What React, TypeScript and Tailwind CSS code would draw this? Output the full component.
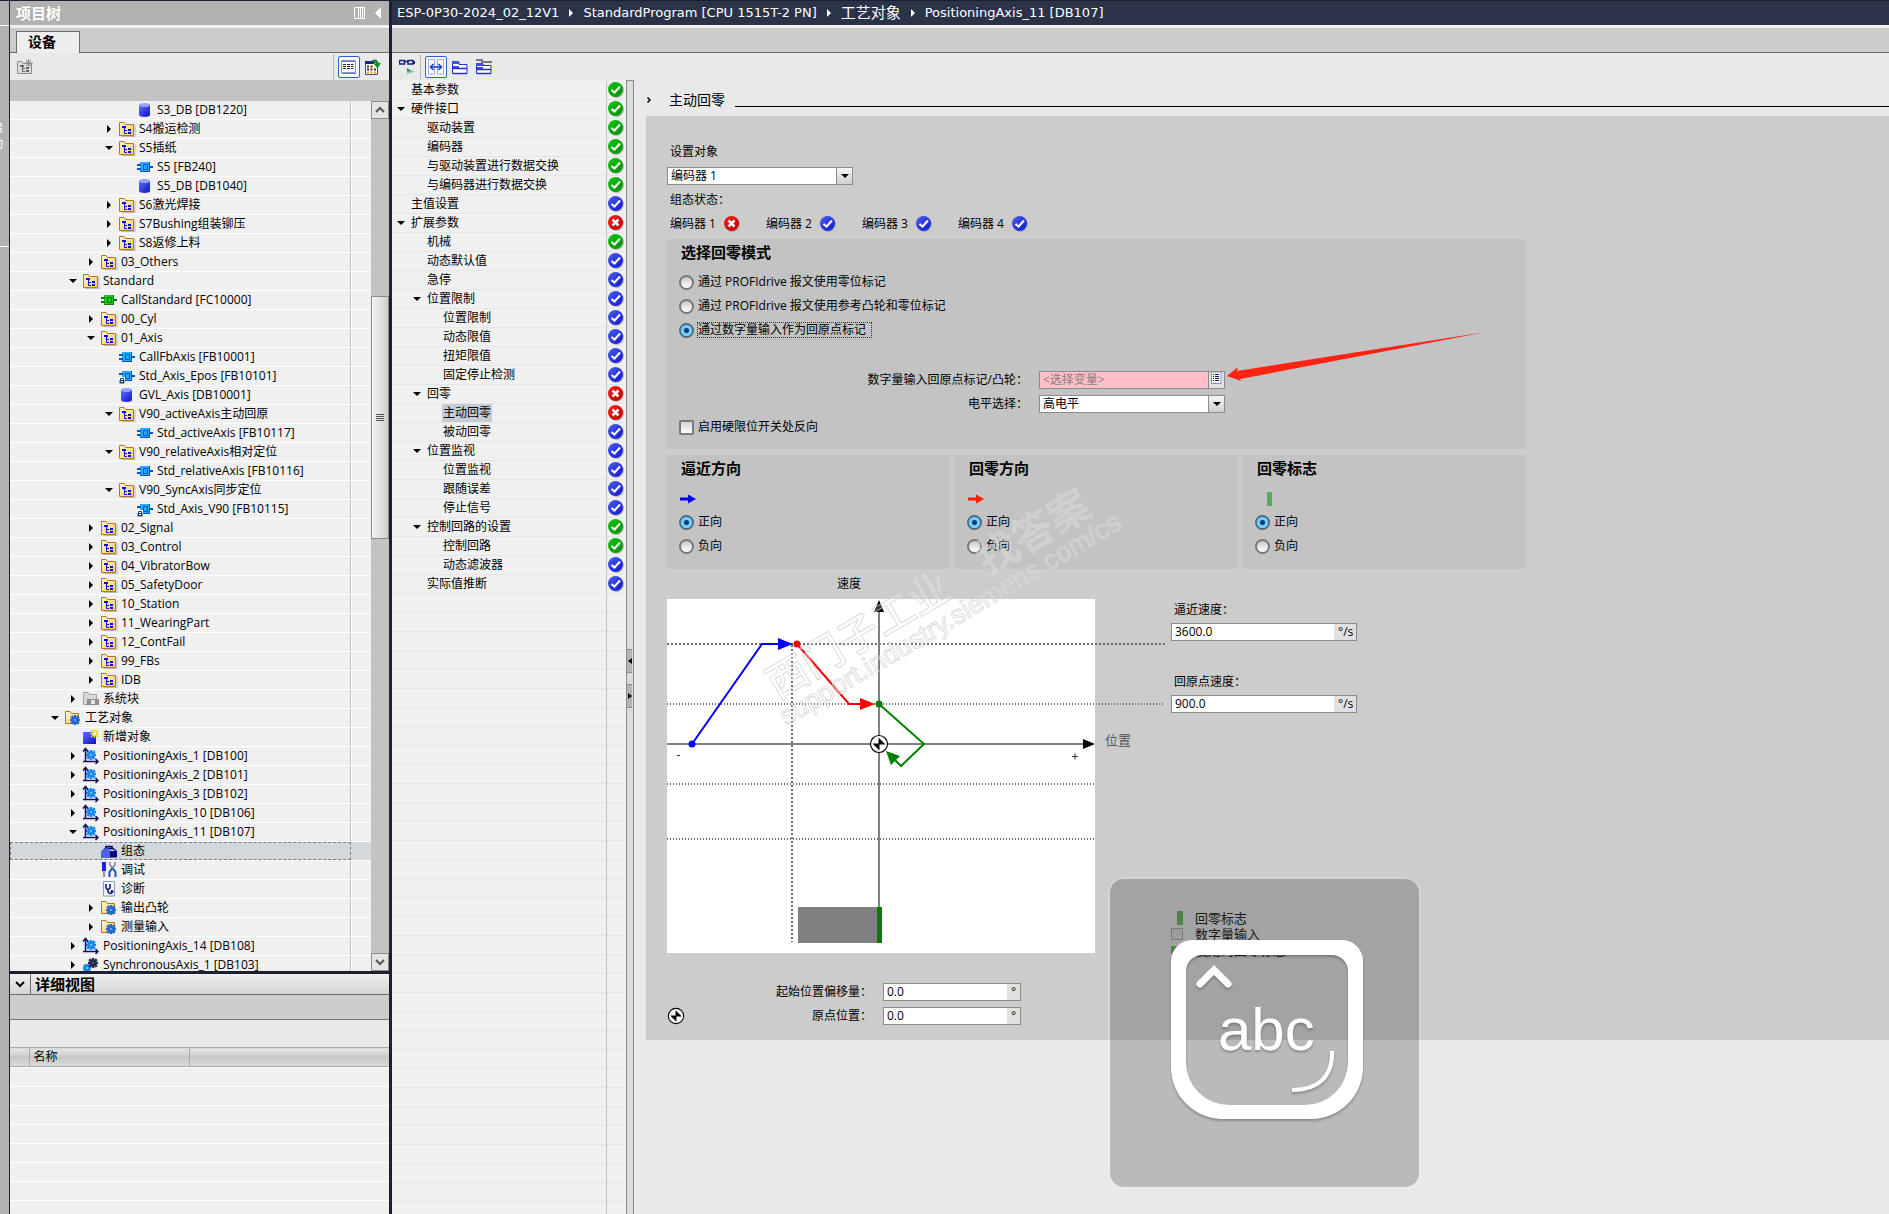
import React, { useState } from 'react';

type IconName =
  | 'folder' | 'db' | 'fb' | 'fbLocked' | 'fc' | 'system' | 'techFolder' | 'add'
  | 'axis' | 'sync' | 'config' | 'commission' | 'diagnose';

interface TreeRow {
  level: number;
  icon: IconName;
  text: string;
  open?: boolean;
  selected?: boolean;
}

type Status = 'ok' | 'default' | 'error';

interface NavRow {
  level: number;
  text: string;
  status: Status;
  open?: boolean;
  selected?: boolean;
}

const treeRows: TreeRow[] = [
  { level: 4, icon: 'db', text: 'S3_DB [DB1220]' },
  { level: 3, icon: 'folder', text: 'S4搬运检测', open: false },
  { level: 3, icon: 'folder', text: 'S5插纸', open: true },
  { level: 4, icon: 'fb', text: 'S5 [FB240]' },
  { level: 4, icon: 'db', text: 'S5_DB [DB1040]' },
  { level: 3, icon: 'folder', text: 'S6激光焊接', open: false },
  { level: 3, icon: 'folder', text: 'S7Bushing组装铆压', open: false },
  { level: 3, icon: 'folder', text: 'S8返修上料', open: false },
  { level: 2, icon: 'folder', text: '03_Others', open: false },
  { level: 1, icon: 'folder', text: 'Standard', open: true },
  { level: 2, icon: 'fc', text: 'CallStandard [FC10000]' },
  { level: 2, icon: 'folder', text: '00_Cyl', open: false },
  { level: 2, icon: 'folder', text: '01_Axis', open: true },
  { level: 3, icon: 'fb', text: 'CallFbAxis [FB10001]' },
  { level: 3, icon: 'fbLocked', text: 'Std_Axis_Epos [FB10101]' },
  { level: 3, icon: 'db', text: 'GVL_Axis [DB10001]' },
  { level: 3, icon: 'folder', text: 'V90_activeAxis主动回原', open: true },
  { level: 4, icon: 'fb', text: 'Std_activeAxis [FB10117]' },
  { level: 3, icon: 'folder', text: 'V90_relativeAxis相对定位', open: true },
  { level: 4, icon: 'fb', text: 'Std_relativeAxis [FB10116]' },
  { level: 3, icon: 'folder', text: 'V90_SyncAxis同步定位', open: true },
  { level: 4, icon: 'fbLocked', text: 'Std_Axis_V90 [FB10115]' },
  { level: 2, icon: 'folder', text: '02_Signal', open: false },
  { level: 2, icon: 'folder', text: '03_Control', open: false },
  { level: 2, icon: 'folder', text: '04_VibratorBow', open: false },
  { level: 2, icon: 'folder', text: '05_SafetyDoor', open: false },
  { level: 2, icon: 'folder', text: '10_Station', open: false },
  { level: 2, icon: 'folder', text: '11_WearingPart', open: false },
  { level: 2, icon: 'folder', text: '12_ContFail', open: false },
  { level: 2, icon: 'folder', text: '99_FBs', open: false },
  { level: 2, icon: 'folder', text: 'IDB', open: false },
  { level: 1, icon: 'system', text: '系统块', open: false },
  { level: 0, icon: 'techFolder', text: '工艺对象', open: true },
  { level: 1, icon: 'add', text: '新增对象' },
  { level: 1, icon: 'axis', text: 'PositioningAxis_1 [DB100]', open: false },
  { level: 1, icon: 'axis', text: 'PositioningAxis_2 [DB101]', open: false },
  { level: 1, icon: 'axis', text: 'PositioningAxis_3 [DB102]', open: false },
  { level: 1, icon: 'axis', text: 'PositioningAxis_10 [DB106]', open: false },
  { level: 1, icon: 'axis', text: 'PositioningAxis_11 [DB107]', open: true },
  { level: 2, icon: 'config', text: '组态', selected: true },
  { level: 2, icon: 'commission', text: '调试' },
  { level: 2, icon: 'diagnose', text: '诊断' },
  { level: 2, icon: 'techFolder', text: '输出凸轮', open: false },
  { level: 2, icon: 'techFolder', text: '测量输入', open: false },
  { level: 1, icon: 'axis', text: 'PositioningAxis_14 [DB108]', open: false },
  { level: 1, icon: 'sync', text: 'SynchronousAxis_1 [DB103]', open: false }
];

const navRows: NavRow[] = [
  { level: 0, text: '基本参数', status: 'ok' },
  { level: 0, text: '硬件接口', status: 'ok', open: true },
  { level: 1, text: '驱动装置', status: 'ok' },
  { level: 1, text: '编码器', status: 'ok' },
  { level: 1, text: '与驱动装置进行数据交换', status: 'ok' },
  { level: 1, text: '与编码器进行数据交换', status: 'ok' },
  { level: 0, text: '主值设置', status: 'default' },
  { level: 0, text: '扩展参数', status: 'error', open: true },
  { level: 1, text: '机械', status: 'ok' },
  { level: 1, text: '动态默认值', status: 'default' },
  { level: 1, text: '急停', status: 'default' },
  { level: 1, text: '位置限制', status: 'default', open: true },
  { level: 2, text: '位置限制', status: 'default' },
  { level: 2, text: '动态限值', status: 'default' },
  { level: 2, text: '扭矩限值', status: 'default' },
  { level: 2, text: '固定停止检测', status: 'default' },
  { level: 1, text: '回零', status: 'error', open: true },
  { level: 2, text: '主动回零', status: 'error', selected: true },
  { level: 2, text: '被动回零', status: 'default' },
  { level: 1, text: '位置监视', status: 'default', open: true },
  { level: 2, text: '位置监视', status: 'default' },
  { level: 2, text: '跟随误差', status: 'default' },
  { level: 2, text: '停止信号', status: 'default' },
  { level: 1, text: '控制回路的设置', status: 'ok', open: true },
  { level: 2, text: '控制回路', status: 'ok' },
  { level: 2, text: '动态滤波器', status: 'default' },
  { level: 1, text: '实际值推断', status: 'default' }
];

const Gear: React.FC<{ cx: number; cy: number; r: number; color: string; hole?: string }> = ({ cx, cy, r, color, hole = '#fff' }) => (
  <g stroke={color} strokeWidth="2.500">
    <path d={`M${cx - r} ${cy}H${cx + r}M${cx} ${cy - r}V${cy + r}`} />
    <path d={`M${cx - r * 0.75} ${cy - r * 0.75}L${cx + r * 0.75} ${cy + r * 0.75}M${cx + r * 0.75} ${cy - r * 0.75}L${cx - r * 0.75} ${cy + r * 0.75}`} />
    <circle cx={cx} cy={cy} r={r * 0.65} fill={color} stroke="none" />
    <circle cx={cx} cy={cy} r=".8" fill={hole} stroke="none" />
  </g>
);

const FolderShape = () => (
  <>
    <path d="M2.5 15.5H16V4" stroke="#b9b9b9" fill="none" />
    <path d="M.5 1.5H5L6.500 3.500H14.500V14.500H.5Z" fill="url(#folderFill)" stroke="#b07a1c" />
  </>
);

const Block: React.FC<{ light: string; dark: string; locked?: boolean }> = ({ light, dark, locked }) => (
  <>
    <path d="M3 3H13V13H3Z" fill={dark} />
    <path d="M3 3H12V12H3Z" fill={light} />
    <path d="M0 5H4V7H0ZM0 9H4V11H0ZM12 7H16V9H12Z" fill={dark} />
    <path d="M6.500 5.500H10.500V10.500H6.500Z" fill={light} stroke={dark} />
    {locked && (
      <>
        <path d="M0 9H6V16H0Z" fill="#fff" />
        <path d="M1.500 12V10.500H4.500V12" stroke="#1c3f78" fill="none" />
        <path d="M.5 12H5.500V15.500H.5Z" fill="#1c3f78" />
        <path d="M2 13.500H4" stroke="#fff" />
      </>
    )}
  </>
);

const TreeIcon: React.FC<{ name: IconName }> = ({ name }) => (
  <svg className="w-4 h-4 shrink-0 overflow-visible" viewBox="0 0 16 16" fill="none">
    {name === 'folder' && (
      <>
        <FolderShape />
        <path d="M3 5H7V7H3ZM9 8H12V10H9ZM9 11H12V13H9Z" fill="#0808e8" />
        <path d="M5.500 7V12.500H8M5.500 9.500H8" stroke="#0808e8" />
      </>
    )}
    {name === 'db' && (
      <>
        <path d="M2 3V13C2 15.500 13 15.500 13 13V3Z" fill="url(#dbFill)" />
        <ellipse cx="7.500" cy="3" rx="5.500" ry="2" fill="#8ea2ff" />
      </>
    )}
    {name === 'fb' && <Block light="#25a8ff" dark="#0057c2" />}
    {name === 'fbLocked' && <Block light="#25a8ff" dark="#0057c2" locked />}
    {name === 'fc' && <Block light="#1fc41f" dark="#0b7a17" />}
    {name === 'system' && (
      <>
        <path d="M.5 1.500H5L6.500 3.500H13.500V13.500H.5Z" fill="#d8d8d8" stroke="#a2a2a2" />
        <path d="M4 8H16V14H4Z" fill="#8c8c8c" />
        <path d="M8 9H12V13H8Z" fill="#e4e4e4" />
      </>
    )}
    {name === 'techFolder' && (
      <>
        <path d="M.5 1.500H5L6.500 3.500H13.500V13.500H.5Z" fill="url(#folderFill)" stroke="#b07a1c" />
        <Gear cx={10} cy={10} r={5} color="#2469d8" hole="#ffe9b0" />
      </>
    )}
    {name === 'add' && (
      <>
        <path d="M0 3H13V15H0Z" fill="url(#dbFill)" />
        <path d="M11.500 0V9M7 4.500H16M8 1L15 8M15 1L8 8" stroke="#e8dc20" strokeWidth="1.500" />
        <circle cx="11.500" cy="4.500" r="1.500" fill="#fff" />
      </>
    )}
    {name === 'axis' && (
      <>
        <Gear cx={8} cy={7} r={5} color="#1787ee" />
        <path d="M2.500 1V13.500H14M0 3.500L2.500 .5L5 3.500M12.500 11L15 13.500L12.500 16M0 13.500H2.500" stroke="#14145c" strokeWidth="1.500" />
      </>
    )}
    {name === 'sync' && (
      <>
        <Gear cx={4} cy={11} r={4} color="#1787ee" />
        <Gear cx={10} cy={6} r={5} color="#23284f" hole="#8890c8" />
      </>
    )}
    {name === 'config' && (
      <>
        <path d="M0 9L4 4.500H12L16 8V14.500H0Z" fill="#05057f" />
        <path d="M0 9L4 5H7L9 9V14.500H0Z" fill="#4f62e8" />
        <path d="M5 5.500V3.500H11V5.500" stroke="#05057f" strokeWidth="1.500" />
        <path d="M7 6.500H13L14 8H9Z" fill="#c9d0ff" />
      </>
    )}
    {name === 'commission' && (
      <>
        <path d="M1 0H5V9H1Z" fill="#1726d8" />
        <path d="M3 9V15" stroke="#6d7590" strokeWidth="1.500" />
        <path d="M8.500 15V10L11.500 6L14.500 10V15" stroke="#234ec4" strokeWidth="2" />
        <path d="M9 0V3L11.500 6L14 3V0" stroke="#7d86a4" strokeWidth="1.500" />
      </>
    )}
    {name === 'diagnose' && (
      <>
        <path d="M2.500 .5H13.500V15H2.500Z" fill="#eef2ff" stroke="#8b9bc8" />
        <path d="M5 3V6C5 9 9 9 9 6V3M7 8V10C7 13 11 13 11 11" stroke="#14145c" strokeWidth="1.500" />
        <circle cx="11" cy="10.500" r="1.500" fill="#14145c" />
      </>
    )}
  </svg>
);

const Expander: React.FC<{ open?: boolean }> = ({ open }) => (
  <span className="w-[18px] h-4 shrink-0 flex items-center">
    {open !== undefined && (
      <button type="button" aria-label={open ? '折叠' : '展开'} className="w-4 h-4 flex items-center justify-center">
        <svg className="w-2 h-2" viewBox="0 0 8 8">
          {open ? <path d="M0 2H8L4 6Z" /> : <path d="M2 0L6 4L2 8Z" />}
        </svg>
      </button>
    )}
  </span>
);

const StatusIcon: React.FC<{ status: Status }> = ({ status }) => (
  <svg className="w-4 h-4 shrink-0" viewBox="0 0 16 16" fill="none">
    <circle cx="8.500" cy="8.500" r="7.500" fill="#9a9a9a" opacity=".6" />
    <circle cx="7.500" cy="7.500" r="7.500" fill={`url(#${status}Fill)`} />
    {status === 'error' ? (
      <path d="M4.500 4.500L10.500 10.500M10.500 4.500L4.500 10.500" stroke="#fff" strokeWidth="2.500" />
    ) : (
      <path d="M3.500 8L6.500 10.500L12 4.500" stroke="#fff" strokeWidth="2" />
    )}
  </svg>
);

// Shared gradients referenced by the small icons
const Gradients = () => (
  <svg className="absolute w-0 h-0" aria-hidden="true">
    <defs>
      <linearGradient id="folderFill" x1="0" y1="0" x2="1" y2="1">
        <stop offset="0" stopColor="#fff6d0" />
        <stop offset="1" stopColor="#fbc95a" />
      </linearGradient>
      <linearGradient id="dbFill" x1="0" y1="0" x2="1" y2="1">
        <stop offset="0" stopColor="#5a70ff" />
        <stop offset="1" stopColor="#1010c8" />
      </linearGradient>
      <linearGradient id="okFill" x1="0" y1="0" x2="1" y2="1">
        <stop offset="0" stopColor="#0cca0c" />
        <stop offset="1" stopColor="#078a07" />
      </linearGradient>
      <linearGradient id="defaultFill" x1="0" y1="0" x2="1" y2="1">
        <stop offset="0" stopColor="#4a62ee" />
        <stop offset="1" stopColor="#1212cc" />
      </linearGradient>
      <linearGradient id="errorFill" x1="0" y1="0" x2="1" y2="1">
        <stop offset="0" stopColor="#ff1c1c" />
        <stop offset="1" stopColor="#b80000" />
      </linearGradient>
    </defs>
  </svg>
);

const ProjectTree = () => (
  <div className="flex-1 min-h-0 flex bg-[#f0f0f0]">
    <ul className="flex-1 min-w-0 overflow-hidden">
      {treeRows.map((row, index) => (
        <li key={index} className="flex h-[19px] border-b border-white">
          <div
            className={
              row.selected
                ? 'flex-1 min-w-0 flex items-center bg-[#d2d8dc] outline-1 outline-dashed -outline-offset-1 outline-[#7c7c7c] whitespace-nowrap'
                : 'flex-1 min-w-0 flex items-center border-r border-[#bdbdbd] whitespace-nowrap'
            }
            style={{ paddingLeft: 37 + row.level * 18 }}
          >
            <Expander open={row.open} />
            <TreeIcon name={row.icon} />
            <span className="ml-1">{row.text}</span>
          </div>
          <div className={row.selected ? 'w-5 bg-[#d2d8dc]' : 'w-5 border-l border-white'} />
        </li>
      ))}
    </ul>
    <div className="w-[18px] bg-[#c3c3c3] flex flex-col">
      <button type="button" aria-label="向上滚动" className="h-[18px] shrink-0 border border-[#8c8c8c] bg-[#e4e4e4] flex items-center justify-center">
        <svg className="w-[10px] h-[10px]" viewBox="0 0 10 10" fill="none">
          <path d="M1 7L5 3L9 7" stroke="#555" strokeWidth="2" />
        </svg>
      </button>
      <div className="flex-[178] min-h-0" />
      <div className="flex-[242] min-h-0 border border-[#8c8c8c] bg-linear-to-r from-[#f4f4f4] to-[#cfcfcf] flex flex-col items-center justify-center gap-px">
        <span className="w-2 h-px bg-[#555]" />
        <span className="w-2 h-px bg-[#555]" />
        <span className="w-2 h-px bg-[#555]" />
        <span className="w-2 h-px bg-[#555]" />
      </div>
      <div className="flex-[415] min-h-0" />
      <button type="button" aria-label="向下滚动" className="h-[18px] shrink-0 border border-[#8c8c8c] bg-[#e4e4e4] flex items-center justify-center">
        <svg className="w-[10px] h-[10px]" viewBox="0 0 10 10" fill="none">
          <path d="M1 3L5 7L9 3" stroke="#555" strokeWidth="2" />
        </svg>
      </button>
    </div>
  </div>
);

const DetailView = () => (
  <section className="h-[243px] shrink-0 flex flex-col border-t-[3px] border-[#1b2033]">
    <div className="h-[21px] shrink-0 flex items-stretch border-b border-[#6b6b6b] bg-linear-to-b from-[#f0f0f0] to-[#d4d4d4]">
      <button type="button" aria-label="折叠详细视图" className="w-[21px] border-r border-[#6b6b6b] flex items-center justify-center">
        <svg className="w-[10px] h-[10px]" viewBox="0 0 10 10" fill="none">
          <path d="M1 3L5 7L9 3" stroke="#000" strokeWidth="2" />
        </svg>
      </button>
      <h2 className="pl-1 text-[15px] leading-5 font-bold">详细视图</h2>
    </div>
    <div className="h-[25px] shrink-0 bg-[#ccc] border-b border-[#777]" />
    <div className="h-[27px] shrink-0 bg-[#e9e9e9]" />
    <table className="w-full shrink-0 table-fixed border-collapse">
      <thead>
        <tr className="h-[19px] bg-linear-to-b from-[#e6e6e6] via-[#c8c8c8] to-[#dadada] border-y border-[#a9a9a9]">
          <th className="w-[19px] border-r border-[#a9a9a9]" />
          <th className="w-[160px] pl-1 text-left font-normal leading-4 border-r border-[#a9a9a9]">名称</th>
          <th />
        </tr>
      </thead>
    </table>
    <div className="flex-1 bg-[repeating-linear-gradient(to_bottom,#fff_0_1px,#f0f0f0_1px_19px)]" />
  </section>
);

const LeftPanel = () => (
  <aside className="w-[380px] shrink-0 flex flex-col border-l border-[#1b2033]">
    <div className="h-[27px] shrink-0 bg-[#b1b1b1] border-b-3 border-[#f0f0f0] flex items-center pl-[6px] pr-2 text-white">
      <h1 className="flex-1 text-[15px] leading-5 font-bold">项目树</h1>
      <button type="button" aria-label="列" className="mr-[10px]">
        <svg className="w-[11px] h-3 block" viewBox="0 0 11 12" fill="none" stroke="#fff">
          <path d="M.5 .5H10.500V11.500H.5ZM4.500 1V11M6.500 1V11M8.500 1V11" />
        </svg>
      </button>
      <button type="button" aria-label="收起">
        <svg className="w-[6px] h-3 block" viewBox="0 0 6 12">
          <path d="M6 0V12L0 6Z" fill="#fff" />
        </svg>
      </button>
    </div>
    <div className="h-[25px] shrink-0 bg-[#ccc] border-b border-[#6b6b6b] flex items-end pl-[6px]">
      <button type="button" className="w-16 h-[22px] -mb-px bg-[#eee] border border-b-0 border-[#6b6b6b] pr-3 pb-[2px] text-[14px] leading-4 font-bold">
        设备
      </button>
    </div>
    <div className="h-[27px] shrink-0 bg-[#e9e9e9] flex items-center pl-[7px] pr-2">
      <button type="button" aria-label="添加新组" className="mr-auto">
        <svg className="w-4 h-4 block" viewBox="0 0 16 16" fill="none">
          <path d="M.5 2.500H5L6 4.500H14.500V14.500H.5Z" fill="#ddd" stroke="#8f8f8f" />
          <path d="M3 6H7V8H3ZM9 8H12V10H9ZM9 11H12V13H9Z" fill="#666" />
          <path d="M5.500 8V12.500H8M5.500 9.500H8" stroke="#666" />
          <path d="M11.500 0V8M8 4H16M9 1L14 7M14 1L9 7" stroke="#8c8c8c" />
        </svg>
      </button>
      <span className="h-6 border-l border-dotted border-[#888] mr-1" />
      <button type="button" aria-label="详细信息" className="w-[22px] h-[22px] mr-[5px] rounded-xs border border-[#2f62d0] bg-[#f4f7ff] flex items-center justify-center">
        <svg className="w-4 h-4" viewBox="0 0 16 16" fill="none">
          <path d="M.5 1.500H14.500V13.500H.5Z" fill="#fff" stroke="#8a92cc" />
          <path d="M1 2.500H14M1 14.500H15" stroke="#6a74c8" />
          <path d="M2 5.500H12.500M2 7.500H12.500M2 9.500H12.500" stroke="#222" strokeDasharray="3 1" />
        </svg>
      </button>
      <button type="button" aria-label="概览">
        <svg className="w-4 h-4 block" viewBox="0 0 16 16" fill="none">
          <path d="M.5 3.500H12.500V15.500H.5Z" fill="#fff" stroke="#4a5078" />
          <path d="M0 2H9V5H0Z" fill="#15257c" />
          <path d="M2 7.500H8M2 10.500H12" stroke="#4a2c10" strokeWidth="2" strokeDasharray="2 1.500" />
          <path d="M2 13.500H12" stroke="#f59a14" strokeWidth="2" strokeDasharray="2 1.500" />
          <path d="M6 3C8 -1 13 0 13.500 4H16L12.500 9.500L8.500 4.500H10.500C10 2.500 8 2 6 3Z" fill="#0f8f20" />
        </svg>
      </button>
    </div>
    <div className="h-[21px] shrink-0 bg-[#c3c3c3]" />
    <ProjectTree />
    <DetailView />
  </aside>
);

const Breadcrumb = () => {
  const parts = ['ESP-0P30-2024_02_12V1', 'StandardProgram [CPU 1515T-2 PN]', '工艺对象', 'PositioningAxis_11 [DB107]'];
  return (
    <nav className="h-[27px] shrink-0 bg-[#2b3349] border-b-3 border-[#f0f0f0] flex items-center gap-[10px] pl-[5px] text-white text-[13px] font-['DejaVu_Sans','Noto_Sans_CJK_SC',sans-serif] whitespace-nowrap">
      {parts.map((part, index) => (
        <React.Fragment key={part}>
          {index > 0 && (
            <svg className="w-1 h-2" viewBox="0 0 4 8">
              <path d="M0 0L4 4L0 8Z" fill="#fff" />
            </svg>
          )}
          <a href="#" className={index === 2 ? 'text-[15px]' : ''}>{part}</a>
        </React.Fragment>
      ))}
    </nav>
  );
};

const EditorToolbar = () => (
  <div className="h-[27px] shrink-0 bg-[#e9e9e9] flex items-center pl-[7px]">
    <button type="button" aria-label="监视" className="mr-[5px]">
      <svg className="w-4 h-4 block" viewBox="0 0 16 16" fill="none">
        <path d="M.5 1.500H5.500V5H.5ZM9 1.500H14V5H9ZM5.500 2.500H9M15.500 2V5" stroke="#1a237e" strokeWidth="1.500" />
        <path d="M8 9L16 12.500L8 15.500Z" fill="#9fc9b0" />
        <path d="M8 9L12.500 12.500H8Z" fill="#0aa648" />
      </svg>
    </button>
    <span className="h-6 border-l border-dotted border-[#888] mr-1" />
    <button type="button" aria-label="参数视图" className="w-[22px] h-[22px] mr-[5px] rounded-xs border border-[#2f62d0] bg-[#f4f7ff] flex items-center justify-center">
      <svg className="w-4 h-4" viewBox="0 0 16 16" fill="none">
        <path d="M.5 .5H6.500V15H.5ZM9.500 .5H15.500V15H9.500Z" fill="#fff" stroke="#a4acd8" />
        <path d="M3 8H13M5.500 5L2.500 8L5.500 11M10.500 5L13.500 8L10.500 11" stroke="#1540c8" strokeWidth="1.500" />
      </svg>
    </button>
    <button type="button" aria-label="展开全部" className="mr-2">
      <svg className="w-4 h-4 block" viewBox="0 0 16 16" fill="none">
        <path d="M.5 3V14.500H15V5.500H7V3" fill="#fff" stroke="#2530c8" />
        <path d="M0 2H7V5H0ZM1 7H7V10H1Z" fill="#3b4fe0" />
        <path d="M1 9.500H15M1 14.500H15" stroke="#2530c8" strokeWidth="1.500" />
      </svg>
    </button>
    <button type="button" aria-label="折叠全部">
      <svg className="w-4 h-4 block" viewBox="0 0 16 16" fill="none">
        <path d="M0 1H6V3H16" stroke="#777" strokeWidth="2" />
        <path d="M.5 5V14.500H15V6.500H7V5" fill="#fff" stroke="#2530c8" />
        <path d="M0 4H7V7H0ZM1 8H7V11H1Z" fill="#3b4fe0" />
        <path d="M1 10.500H15M1 14.500H15" stroke="#2530c8" strokeWidth="1.500" />
      </svg>
    </button>
  </div>
);

const ParameterNav = () => (
  <nav className="w-[234px] shrink-0 flex flex-col pt-px bg-[#f0f0f0] overflow-hidden">
    <ul>
      {navRows.map((row, index) => (
        <li key={index} className="flex h-[19px]">
          <div
            className="flex-1 flex items-center border-b border-[#e6e6e6] whitespace-nowrap"
            style={{ paddingLeft: 1 + row.level * 16 }}
          >
            <Expander open={row.open} />
            <a href="#" className={row.selected ? 'bg-[#c3cdd8] h-[18px] -ml-px px-px leading-[18px]' : 'leading-[18px]'}>
              {row.text}
            </a>
          </div>
          <div className="w-5 border-l border-l-[#c4c4c4] border-b border-b-[#e6e6e6] flex items-center pl-px">
            <StatusIcon status={row.status} />
          </div>
        </li>
      ))}
    </ul>
    <div className="flex-1 flex bg-[repeating-linear-gradient(to_bottom,#f0f0f0_0_18px,#e6e6e6_18px_19px)]">
      <div className="flex-1" />
      <div className="w-5 border-l border-[#c4c4c4]" />
    </div>
  </nav>
);

const Splitter = () => (
  <div className="w-2 shrink-0 bg-[#dcdcdc] border border-b-0 border-[#8c8c8c] flex flex-col gap-[11px] pt-[568px]">
    <button type="button" aria-label="向左收起" className="w-[5px] h-6 border-y border-[#8c8c8c] bg-[#b4b4b4] flex items-center justify-center">
      <svg className="w-1 h-[6px]" viewBox="0 0 4 6"><path d="M4 0V6L0 3Z" /></svg>
    </button>
    <button type="button" aria-label="向右展开" className="w-[5px] h-6 border-y border-[#8c8c8c] bg-[#b4b4b4] flex items-center justify-center">
      <svg className="w-1 h-[6px]" viewBox="0 0 4 6"><path d="M0 0L4 3L0 6Z" /></svg>
    </button>
  </div>
);

const radioClass =
  'appearance-none w-[15px] h-[15px] shrink-0 rounded-full border-2 border-[#777] bg-linear-to-b from-[#c9c9c9] to-[#fff] checked:border-[#4a6a84] checked:bg-[radial-gradient(circle_at_center,#003c84_0_2px,#6cc4ee_3px,#8fe4ff_6px)]';

interface RadioProps {
  name: string;
  label: string;
  checked: boolean;
  onChange: () => void;
  focused?: boolean;
}

const Radio: React.FC<RadioProps> = ({ name, label, checked, onChange, focused }) => (
  <label className="h-6 flex items-center gap-[3px]">
    <input type="radio" name={name} checked={checked} onChange={onChange} className={radioClass} />
    <span className={focused ? 'px-px pr-[6px] leading-4 outline-1 outline-dotted outline-[#333] -outline-offset-1' : 'px-px leading-4'}>
      {label}
    </span>
  </label>
);

const Select: React.FC<{ id: string; options: string[] }> = ({ id, options }) => (
  <div className="relative w-[186px] h-[18px]">
    <select id={id} className="appearance-none block w-full h-full bg-white border border-[#8c8c8c] pl-[3px] leading-4">
      {options.map((option) => (
        <option key={option}>{option}</option>
      ))}
    </select>
    <span className="absolute right-0 top-0 w-[17px] h-[18px] border border-[#8c8c8c] bg-linear-to-b from-[#f6f6f6] to-[#cfcfcf] flex items-center justify-center pointer-events-none">
      <svg className="w-2 h-1" viewBox="0 0 8 4"><path d="M0 0H8L4 4Z" /></svg>
    </span>
  </div>
);

const UnitInput: React.FC<{ id: string; value: string; unit: string; wide?: boolean }> = ({ id, value, unit, wide }) => (
  <div className={wide ? 'w-[186px] h-[18px] flex border border-[#8c8c8c] bg-white' : 'w-[138px] h-[18px] flex border border-[#8c8c8c] bg-white'}>
    <input id={id} defaultValue={value} className="flex-1 min-w-0 pl-[3px] leading-4 outline-none" />
    <span className={wide ? 'w-[22px] bg-[#e0e0e0] pl-1 leading-4' : 'w-[13px] bg-[#e0e0e0] pl-1 leading-4'}>{unit}</span>
  </div>
);

const OriginMark = () => (
  <>
    <circle r="8.500" fill="#fff" stroke="#000" strokeWidth="1.200" />
    <path d="M-.5 -6.500L6.500 .5H-.5ZM-6.500 -.5H.5V6.500Z" fill="#000" />
  </>
);

const HomingChart = () => (
  <svg className="block w-[428px] h-[354px] bg-white overflow-visible" viewBox="0 0 428 354" fill="none">
    <g stroke="#6e6e6e" strokeWidth="2">
      <path d="M0 45H498M125 46V343" strokeDasharray="2 2" />
      <path d="M0 105H498M0 185H428M0 240H428" strokeDasharray="1 2" />
      <path d="M212 10V308M0 145H418" stroke="#808080" />
    </g>
    <path d="M212 1L217 13H207ZM428 145L416 140V150Z" fill="#000" />
    <path d="M131 308H212V344H131Z" fill="#808080" />
    <path d="M210 308H215V344H210Z" fill="#008000" />

    <path d="M25 145L95 45H112" stroke="#0000ff" strokeWidth="2" />
    <path d="M126 45L111 39V51Z" fill="#0000ff" />
    <circle cx="25" cy="145" r="3.500" fill="#0000ff" />

    <path d="M130 45L182 105H194" stroke="#ff0000" strokeWidth="2" />
    <path d="M208 105L193 99V111Z" fill="#ff0000" />
    <circle cx="130" cy="45" r="3.500" fill="#ff0000" />

    <path d="M212 105L257 145L234 167L226 159" stroke="#008000" strokeWidth="2" />
    <path d="M219 152L233 157L224 166Z" fill="#008000" />
    <circle cx="212" cy="105" r="3.500" fill="#008000" />

    <g transform="translate(212 145)"><OriginMark /></g>
    <path d="M10 156.500H13M405 157.500H411M408 154.500V160.500" stroke="#333" />
  </svg>
);

// Direction group: title, marker symbol and the two direction radios
const DirectionGroup: React.FC<{ name: string; title: string; marker: React.ReactNode }> = ({ name, title, marker }) => {
  const [positive, setPositive] = useState(true);
  return (
    <fieldset className="bg-[#c3c3c3] pt-[5px] pb-[11px] pl-3 min-w-0">
      <h3 className="pl-[2px] text-[15px] leading-4 font-bold">{title}</h3>
      <div className="mt-[11px] h-[23px] flex items-center">{marker}</div>
      <Radio name={name} label="正向" checked={positive} onChange={() => setPositive(true)} />
      <Radio name={name} label="负向" checked={!positive} onChange={() => setPositive(false)} />
    </fieldset>
  );
};

const SmallArrow: React.FC<{ color: string }> = ({ color }) => (
  <svg className="w-[18px] h-[10px]" viewBox="0 0 18 10">
    <path d="M1 3.500H9V0.500L17 5L9 9.500V6.500H1Z" fill={color} />
  </svg>
);

const ModeGroup = () => {
  const [mode, setMode] = useState(2);
  const modes = ['通过 PROFIdrive 报文使用零位标记', '通过 PROFIdrive 报文使用参考凸轮和零位标记', '通过数字量输入作为回原点标记'];
  return (
    <section className="relative mt-[7px] bg-[#c3c3c3] pt-[5px] pb-[11px]">
      <h3 className="pl-[14px] mb-[10px] text-[15px] leading-4 font-bold">选择回零模式</h3>
      <div className="pl-3">
        {modes.map((label, index) => (
          <Radio key={label} name="mode" label={label} checked={mode === index} onChange={() => setMode(index)} focused={index === 2} />
        ))}
      </div>
      <div className="mt-[26px] h-6 flex items-center gap-[11px]">
        <label htmlFor="input" className="w-[361px] text-right">数字量输入回原点标记/凸轮：</label>
        <div className="w-[186px] h-[18px] flex border border-[#8c8c8c] bg-[#ffc0cb]">
          <input id="input" placeholder="<选择变量>" className="flex-1 min-w-0 pl-[3px] leading-4 outline-none placeholder:text-[#8a7a7d]" />
          <button type="button" aria-label="选择变量" className="w-4 bg-[#e0e0e0] border-l border-[#8c8c8c] flex items-start justify-center">
            <svg className="w-[11px] h-3" viewBox="0 0 11 12" fill="none">
              <path d="M.5 0H10V11.500H.5Z" fill="#fff" stroke="#8a92cc" />
              <path d="M2 2.500H3M4 2.500H8M2 4.500H3M4 4.500H8M2 6.500H3M4 6.500H8M2 8.500H3M4 8.500H8" stroke="#14145c" />
            </svg>
          </button>
        </div>
      </div>
      <div className="h-6 flex items-center gap-[11px]">
        <label htmlFor="level" className="w-[361px] text-right">电平选择：</label>
        <Select id="level" options={['高电平', '低电平']} />
      </div>
      <label className="h-[22px] pl-3 flex items-center gap-1">
        <input type="checkbox" className="appearance-none w-[15px] h-[15px] rounded-xs border-2 border-[#7a7a7a] bg-linear-to-b from-[#d4d4d4] to-white" />
        启用硬限位开关处反向
      </label>
      <svg className="absolute left-[560px] top-[92px] w-[260px] h-[50px] pointer-events-none" viewBox="0 0 260 50">
        <path d="M0 45L11 36L10 40L259 1L13 48L14 50Z" fill="#ff2312" />
      </svg>
    </section>
  );
};

const Watermark = () => (
  <svg className="absolute left-[120px] top-[360px] w-[380px] h-[260px] pointer-events-none overflow-visible" viewBox="0 0 380 260">
    <g
      transform="translate(20 250) rotate(-30.500)"
      fill="#fff"
      fillOpacity=".22"
      stroke="#d2d2d2"
      strokeOpacity=".75"
      className="font-['Liberation_Sans','Noto_Sans_CJK_SC',sans-serif]"
    >
      <text x="6" y="-27" fontSize="41" fontWeight="500">西门子工业</text>
      <text x="250" y="-27" fontSize="41" fontWeight="500">找答案</text>
      <text x="0" y="0" fontSize="27">support.industry.siemens.com/cs</text>
    </g>
  </svg>
);

// Input method indicator shown over the editor
const CapsIndicator = () => (
  <div className="absolute left-[464px] top-[763px] w-[309px] h-[308px] rounded-[14px] bg-black/20 ring-2 ring-white/15 pointer-events-none">
    <svg className="w-full h-full drop-shadow-[0_2px_1px_rgba(0,0,0,0.25)]" viewBox="0 0 309 308" fill="none">
      <path
        fillRule="evenodd"
        fill="#fff"
        d="M82 61H232A21 21 0 0 1 253 82V188A52 52 0 0 1 201 240H113A52 52 0 0 1 61 188V82A21 21 0 0 1 82 61ZM92 76A16 16 0 0 0 76 92V183A43 43 0 0 0 119 226H195A43 43 0 0 0 238 183V92A16 16 0 0 0 222 76Z"
      />
      <path d="M90 105L104 91L118 105" stroke="#fff" strokeWidth="7" strokeLinecap="round" />
      <path d="M222 172C223 198 208 211 182 211" stroke="#fff" strokeWidth="4" />
      <text x="108" y="171" fontSize="60" fill="#fff" className="font-['Liberation_Sans',sans-serif]">abc</text>
    </svg>
  </div>
);

const HomingPage = () => {
  const encoders: { name: string; status: Status }[] = [
    { name: '编码器 1', status: 'error' },
    { name: '编码器 2', status: 'default' },
    { name: '编码器 3', status: 'default' },
    { name: '编码器 4', status: 'default' }
  ];

  return (
    <main className="flex-1 min-w-0 bg-[#e9e9e9]">
      <div className="h-9 flex items-center pl-[13px]">
        <svg className="w-1 h-[6px] mr-[18px] mt-1" viewBox="0 0 4 6" fill="none">
          <path d="M.5 .5L3 3L.5 5.500" stroke="#000" strokeWidth="1.500" />
        </svg>
        <h2 className="text-[14px] leading-4 mt-1">主动回零</h2>
        <span className="flex-1 h-px bg-black ml-[10px] mt-4" />
      </div>

      <div className="relative ml-3 bg-[#ccc] pl-[21px] pt-7 pb-3">
        <label htmlFor="target" className="block pl-[3px] leading-4">设置对象</label>
        <div className="mt-[7px]">
          <Select id="target" options={['编码器 1', '编码器 2', '编码器 3', '编码器 4']} />
        </div>
        <p className="mt-[7px] pl-[3px] leading-4">组态状态：</p>
        <ul className="mt-2 pl-[3px] flex">
          {encoders.map((encoder) => (
            <li key={encoder.name} className="w-[70px] h-4 mr-[26px] flex items-center justify-between">
              {encoder.name}
              <StatusIcon status={encoder.status} />
            </li>
          ))}
        </ul>

        <div className="max-w-[858px]">
          <ModeGroup />
          <div className="mt-[6px] grid grid-cols-3 gap-[6px]">
            <DirectionGroup name="approach" title="逼近方向" marker={<SmallArrow color="#0000ff" />} />
            <DirectionGroup name="homing" title="回零方向" marker={<SmallArrow color="#ff1c00" />} />
            <DirectionGroup name="mark" title="回零标志" marker={<span className="w-[5px] h-[14px] ml-3 bg-[#5fa65f]" />} />
          </div>
        </div>

        <div className="flex">
          <div className="pt-[7px]">
            <p className="mb-[7px] pl-[170px] leading-4">速度</p>
            <HomingChart />
          </div>
          <p className="w-[76px] pl-[10px] pt-[164px] text-[13px] leading-4 text-[#555] font-['Liberation_Serif','Noto_Sans_CJK_SC',serif]">位置</p>
          <div className="pt-[33px]">
            <label htmlFor="approachSpeed" className="block pl-[3px] mb-[5px] leading-4">逼近速度：</label>
            <UnitInput id="approachSpeed" value="3600.0" unit="°/s" wide />
            <label htmlFor="homingSpeed" className="block pl-[3px] mt-[33px] mb-[5px] leading-4">回原点速度：</label>
            <UnitInput id="homingSpeed" value="900.0" unit="°/s" wide />
            <ul className="mt-[197px] text-[13px] leading-4 text-[#222]">
              <li className="flex items-center gap-3">
                <span className="w-3 flex justify-end"><span className="w-[6px] h-[14px] bg-[#5fa65f]" /></span>
                回零标志
              </li>
              <li className="flex items-center gap-3">
                <span className="w-3 h-3 border border-[#999] bg-[#c3c3c3]" />
                数字量输入
              </li>
              <li className="flex items-center gap-3">
                <span className="w-3 h-2 bg-[#5fa65f]" />
                使用的回零标志
              </li>
            </ul>
          </div>
        </div>

        <div className="mt-[22px] h-6 flex items-center gap-[11px]">
          <label htmlFor="offset" className="w-[205px] text-right">起始位置偏移量：</label>
          <UnitInput id="offset" value="0.0" unit="°" />
        </div>
        <div className="h-6 flex items-center gap-[11px]">
          <div className="w-[205px] flex items-center justify-between">
            <svg className="w-[18px] h-[18px]" viewBox="-10 -10 20 20"><OriginMark /></svg>
            <label htmlFor="origin">原点位置：</label>
          </div>
          <UnitInput id="origin" value="0.0" unit="°" />
        </div>
        <Watermark />
        <CapsIndicator />
      </div>
    </main>
  );
};

export default function App() {
  return (
    <div className="relative h-screen flex overflow-hidden border-t border-[#1b2033] bg-[#e9e9e9] text-black text-[12px] leading-4 font-['Open_Sans','Noto_Sans_CJK_SC',sans-serif]">
      <Gradients />
      <div className="w-[9px] shrink-0 bg-[#b1b1b1] overflow-hidden flex flex-col items-end text-white">
        <div className="w-full h-[25px] shrink-0 border-b border-white" />
        <div className="w-full h-[221px] shrink-0 border-b border-white flex flex-col items-end pr-[6px] pt-[94px]">
          <span>启</span>
          <span>动</span>
        </div>
      </div>
      <LeftPanel />
      <div className="flex-1 min-w-0 flex flex-col border-l-3 border-[#1b2033]">
        <Breadcrumb />
        <div className="h-[25px] shrink-0 bg-[#ccc] border-b border-[#6b6b6b]" />
        <EditorToolbar />
        <div className="flex-1 min-h-0 flex">
          <ParameterNav />
          <Splitter />
          <HomingPage />
        </div>
      </div>
    </div>
  );
}
